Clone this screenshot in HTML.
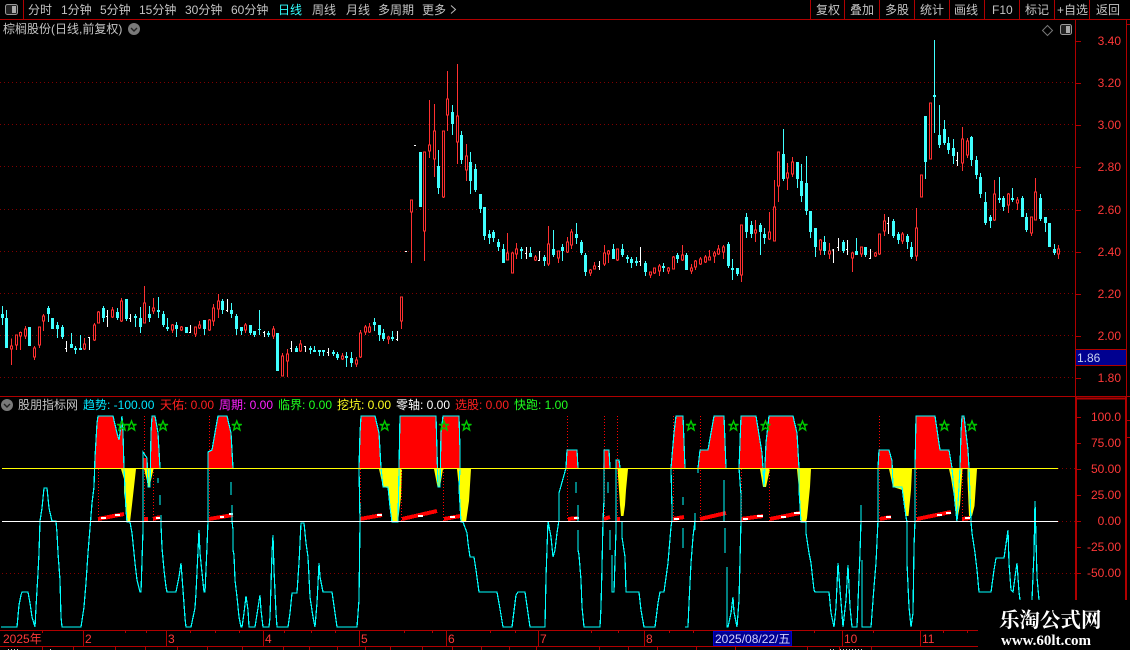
<!DOCTYPE html>
<html><head><meta charset="utf-8"><title>K</title>
<style>
html,body{margin:0;padding:0;background:#000;width:1130px;height:650px;overflow:hidden}
svg{display:block}
text{font-family:"Liberation Sans","WenQuanYi Zen Hei","Noto Sans CJK SC",sans-serif;font-size:12px}
.t{fill:#c4c4c4}
.r{fill:#ff3838}
.l{fill:none;shape-rendering:crispEdges}
</style></head><body>
<svg width="1130" height="650" viewBox="0 0 1130 650" xmlns="http://www.w3.org/2000/svg">
<defs><path id="s" d="M0-5L1.3-1.6 5-1.6 2-.6 3.1 4 0 1.8-3.1 4-2-.6-5-1.6-1.3-1.6Z" fill="none" stroke="#00c800" stroke-width="1.4"/></defs>
<rect width="1130" height="650" fill="#000"/>

<!-- toolbar -->
<g class="l" stroke="#b00000"><path d="M0 19.5H1130M23.5 0V19M810.5 0V19M844.5 0V19M879.5 0V19M914.5 0V19M949.5 0V19M984.5 0V19M1019.5 0V19M1054.5 0V19M1089.5 0V19"/></g>
<rect x="5.5" y="4.5" width="12" height="10" rx="2" fill="#222" stroke="#999"/><rect x="12" y="6" width="4" height="7" fill="#aaa"/>
<text class="t" x="28" y="14">分时</text><text class="t" x="61" y="14">1分钟</text><text class="t" x="100" y="14">5分钟</text><text class="t" x="139" y="14">15分钟</text><text class="t" x="185" y="14">30分钟</text><text class="t" x="231" y="14">60分钟</text><text x="278" y="14" fill="#3ff">日线</text><text class="t" x="312" y="14">周线</text><text class="t" x="346" y="14">月线</text><text class="t" x="378" y="14">多周期</text><text class="t" x="422" y="14">更多</text>
<path d="M451 5.5l4.5 4-4.5 4" fill="none" stroke="#bbb"/>
<text class="t" x="816" y="14">复权</text><text class="t" x="850" y="14">叠加</text><text class="t" x="885" y="14">多股</text><text class="t" x="920" y="14">统计</text><text class="t" x="954" y="14">画线</text><text class="t" x="992" y="14">F10</text><text class="t" x="1025" y="14">标记</text><text class="t" x="1057" y="14">+自选</text><text class="t" x="1096" y="14">返回</text>

<!-- title row -->
<text class="t" x="3" y="33">棕榈股份(日线,前复权)</text>
<circle cx="134" cy="29" r="6" fill="#7a7a7a"/><path d="M131 28l3 3 3-3" fill="none" stroke="#222" stroke-width="1.4"/>
<path d="M1047.5 25.5l5 5-5 5-5-5z" fill="none" stroke="#777"/>
<rect x="1060.5" y="24.5" width="11" height="10" rx="2" fill="#222" stroke="#999"/><rect x="1066" y="26" width="4" height="7" fill="#aaa"/>

<!-- frame -->
<g class="l">
<path stroke="#800000" stroke-dasharray="1 3" d="M0 82.5H1075M0 124.5H1075M0 166.5H1075M0 209.5H1075M0 251.5H1075M0 293.5H1075M0 335.5H1075M0 377.5H1075M2 573.5H1075M1058 468.5H1075M1058 521.5H1075"/>
<path stroke="#b00000" d="M1075.5 19V396M1126.5 19V396M0 396.5H1130M1076 41.5h5M1076 83.5h5M1076 125.5h5M1076 167.5h5M1076 210.5h5M1076 252.5h5M1076 294.5h5M1076 336.5h5M1076 378.5h5M1076 417.5h5M1076 443.5h5M1076 469.5h5M1076 495.5h5M1076 521.5h5M1076 547.5h5M1076 573.5h5M1127 24.5h3M1127 420.5h3M1127 437.5h3"/>
<path stroke="#b00000" stroke-width="2" d="M1076 397V600M1126 397V600M1076 398.5H1127"/>
</g>
<rect x="1076" y="349" width="50" height="16" fill="#000090"/><path class="l" stroke="#b00000" d="M1076 349.5H1126M1076 365.5H1126"/>
<text x="1077" y="362" fill="#c8d0f0" font-size="13">1.86</text>
<g class="r" text-anchor="end">
<text x="1121" y="45">3.40</text><text x="1121" y="87">3.20</text><text x="1121" y="129">3.00</text><text x="1121" y="171">2.80</text><text x="1121" y="214">2.60</text><text x="1121" y="256">2.40</text><text x="1121" y="298">2.20</text><text x="1121" y="340">2.00</text><text x="1121" y="382">1.80</text>
<text x="1121" y="421">100.0</text><text x="1121" y="447">75.00</text><text x="1121" y="473">50.00</text><text x="1121" y="499">25.00</text><text x="1121" y="525">0.00</text><text x="1121" y="551">-25.00</text><text x="1121" y="577">-50.00</text>
</g>

<!-- candles A -->
<g class="l" transform="translate(0 280) scale(.33333)">
<path stroke="#40ffff" stroke-width="3" d="M7 78V135M19 90V204M172 126V174M187 135V177M214 159V204M226 198V222M241 165V210M310 78V126M352 84V120M379 57V123M406 102V141M421 81V159M448 78V126M475 51V114M490 93V141M502 114V153M529 126V171M613 120V165M667 57V102M694 69V114M709 102V165M724 141V165M751 135V165M763 153V171M778 90V165M805 153V171M889 198V216M931 198V222M943 198V216M958 210V228M970 210V228M1000 210V228M1012 216V240M1039 216V261M1054 216V261M1123 114V153M1138 135V183M1150 147V183M1177 153V183M145 78V126"/>
<path stroke="#40ffff" stroke-width="9" d="M7 102V114M19 114V204M88 141V198M145 84V102M157 114V147M172 135V147M187 141V171M214 192V204M226 204V210M241 204V210M310 84V114M352 96V114M379 57V117M406 108V114M421 114V141M448 102V114M475 90V96M490 102V135M502 141V147M529 135V147M559 141V159M613 120V147M667 63V90M694 90V102M709 108V147M724 141V153M751 135V159M763 153V165M778 147V150M805 159V165M832 159V273M889 204V216M931 204V210M943 210V216M958 210V216M970 210V216M1000 216V222M1012 222V234M1039 228V234M1054 234V249M1123 126V135M1138 135V165M1150 159V177M1177 171V177"/>
<path stroke="#ff3030" stroke-width="3" d="M34 175V255M49 163V210M61 155V210M76 138V177M103 198V240M118 141V204M130 102V153M253 174V210M283 129V183M295 93V129M337 81V114M364 54V126M433 18V129M460 54V102M517 132V159M544 138V153M586 141V171M598 123V147M628 117V153M640 72V138M655 42V114M736 129V159M820 138V177M847 219V288M862 207V291M901 180V216M1027 219V240M1069 231V261M1081 150V234M1096 135V165M1108 129V159M1165 168V192M1204 51V147"/>
<path stroke="#ff3030" stroke-width="3" fill="#000" d="M31 198h6V207h-6zM46 165h6V195h-6zM58 158h6V168h-6zM73 147h6V168h-6zM100 204h6V231h-6zM115 141h6V195h-6zM127 108h6V123h-6zM250 192h6V207h-6zM280 135h6V180h-6zM292 96h6V129h-6zM334 90h6V111h-6zM361 63h6V123h-6zM430 69h6V129h-6zM457 84h6V93h-6zM514 135h6V150h-6zM541 141h6V150h-6zM583 141h6V162h-6zM595 135h6V144h-6zM625 120h6V150h-6zM637 84h6V123h-6zM652 63h6V87h-6zM733 135h6V150h-6zM817 147h6V168h-6zM844 228h6V288h-6zM859 222h6V243h-6zM898 192h6V213h-6zM1024 228h6V237h-6zM1066 240h6V252h-6zM1078 159h6V231h-6zM1093 141h6V156h-6zM1105 141h6V156h-6zM1162 171h6V177h-6zM1201 51h6V123h-6z"/>
<path stroke="#fff" stroke-width="3" d="M199 183V216M195 205h4M268 171V210M264 172h4M322 90V141M318 109h4M391 102V126M387 115h4M571 135V159M567 157h4M682 57V96M678 91h4M793 153V171M789 157h4M874 183V216M870 205h4M916 198V216M912 199h4M985 204V228M981 217h4M1192 153V183M1188 178h4"/>
</g>
<!-- candles B -->
<g class="l" transform="translate(400 60) scale(.33333)">
<path stroke="#40ffff" stroke-width="3" d="M115 270V402M157 135V225M184 213V312M211 276V402M226 312V396M241 402V459M253 441V540M268 510V552M280 510V546M295 537V573M310 552V609M364 561V597M391 561V591M433 585V618M460 510V591M487 552V603M529 489V552M544 540V585M556 579V648M640 552V597M667 552V591M682 585V609M694 591V624M709 591V618M736 603V648M790 609V636M832 579V609M859 579V630M985 546V624"/>
<path stroke="#40ffff" stroke-width="9" d="M61 276V441M115 318V384M157 156V192M184 225V300M211 306V363M226 327V390M241 402V447M253 441V528M268 522V534M280 516V534M295 546V561M310 567V609M364 567V573M391 579V591M433 591V603M460 567V585M487 561V573M529 522V534M544 546V579M556 585V636M640 567V597M667 567V585M682 591V597M694 597V609M709 603V609M736 609V636M790 618V624M832 585V597M859 585V630M985 552V618"/>
<path stroke="#ff3030" stroke-width="3" d="M34 420V609M73 276V603M88 120V294M103 132V351M130 213V414M142 33V213M172 12V312M199 252V363M322 519V600M337 576V639M349 549V597M406 585V603M445 498V618M475 573V609M502 531V579M514 507V567M571 627V648M583 606V627M613 555V618M625 570V609M652 567V603M751 636V654M763 624V642M778 612V648M805 621V642M820 588V627M847 555V603M874 612V642M886 600V630M901 591V615M916 585V609M928 570V600M943 573V609M955 555V585M970 555V597"/>
<path stroke="#ff3030" stroke-width="3" fill="#000" d="M31 420h6V456h-6zM70 276h6V513h-6zM85 255h6V273h-6zM100 213h6V297h-6zM127 213h6V411h-6zM139 117h6V165h-6zM169 168h6V246h-6zM196 288h6V330h-6zM319 579h6V600h-6zM334 579h6V639h-6zM346 567h6V582h-6zM403 591h6V600h-6zM442 552h6V612h-6zM472 573h6V594h-6zM499 546h6V576h-6zM511 516h6V555h-6zM568 630h6V639h-6zM580 618h6V627h-6zM610 579h6V612h-6zM622 573h6V582h-6zM649 567h6V600h-6zM748 636h6V645h-6zM760 624h6V639h-6zM775 618h6V633h-6zM802 624h6V633h-6zM817 591h6V627h-6zM844 585h6V600h-6zM871 624h6V633h-6zM883 603h6V621h-6zM898 597h6V612h-6zM913 591h6V606h-6zM925 591h6V600h-6zM940 579h6V588h-6zM952 567h6V582h-6zM967 561h6V576h-6z"/>
<path stroke="#fff" stroke-width="3" d="M15 574h6M42 256h6M379 561V597M375 580h4M418 573V603M414 601h4M598 603V630M594 619h4M721 561V618M717 604h4"/>
</g>
<!-- candles C -->
<g class="l" transform="translate(720 30) scale(.33333)">
<path stroke="#40ffff" stroke-width="3" d="M37 687V750M52 714V738M79 549V624M94 573V624M121 579V675M133 594V642M190 297V453M232 396V474M244 402V516M259 378V555M271 543V624M286 594V681M313 618V675M370 630V669M409 624V675M436 651V681M520 567V624M535 606V642M562 612V657M574 636V687M616 258V447M643 30V309M658 225V354M673 270V345M685 321V372M700 327V402M754 318V408M769 378V447M781 429V504M796 486V585M811 555V594M838 441V519M850 498V543M877 474V516M907 498V561M919 549V606M961 492V573M976 561V606M988 579V651M1003 642V675"/>
<path stroke="#40ffff" stroke-width="9" d="M37 714V720M52 714V732M79 561V606M94 585V612M121 585V606M133 612V624M190 372V447M232 396V447M244 453V498M259 459V543M271 543V606M286 594V651M313 636V663M370 636V663M409 663V675M436 651V675M520 573V618M535 612V630M562 618V636M574 651V681M616 258V396M643 195V201M658 315V345M673 297V339M685 339V360M700 354V378M754 321V390M769 390V435M781 441V492M796 516V579M811 561V573M838 504V510M850 504V531M877 504V510M907 504V561M919 561V600M961 504V567M976 561V579M988 579V651M1003 657V669"/>
<path stroke="#ff3030" stroke-width="3" d="M64 585V756M106 570V636M148 546V630M163 450V633M175 366V516M202 399V480M217 381V441M301 627V675M328 639V687M397 666V726M424 651V681M466 666V681M478 612V675M493 552V618M547 606V642M589 534V693M604 435V501M631 219V387M727 291V423M742 324V384M823 450V573M865 489V549M892 501V540M934 561V618M946 444V570M1015 645V687"/>
<path stroke="#ff3030" stroke-width="3" fill="#000" d="M61 585h6V735h-6zM103 600h6V609h-6zM145 606h6V627h-6zM160 531h6V633h-6zM172 366h6V468h-6zM199 429h6V444h-6zM214 396h6V432h-6zM298 630h6V660h-6zM325 663h6V672h-6zM394 669h6V684h-6zM421 651h6V672h-6zM463 669h6V678h-6zM475 612h6V672h-6zM490 573h6V603h-6zM544 612h6V633h-6zM586 594h6V678h-6zM601 435h6V501h-6zM628 219h6V387h-6zM724 327h6V399h-6zM739 333h6V375h-6zM820 492h6V570h-6zM862 492h6V525h-6zM889 510h6V519h-6zM931 561h6V609h-6zM943 486h6V570h-6zM1012 657h6V672h-6z"/>
<path stroke="#fff" stroke-width="3" d="M340 657V699M336 660h4M355 624V663M351 652h4M382 630V675M378 658h4M451 657V687M447 685h4M505 561V612M501 580h4M712 366V408M708 391h4"/>
</g>

<!-- indicator legend -->
<circle cx="7" cy="405" r="6" fill="#7a7a7a"/><path d="M4 404l3 3 3-3" fill="none" stroke="#222" stroke-width="1.4"/>
<text class="t" x="18" y="409">股朋指标网</text>
<text x="83" y="409" fill="#00e8ff">趋势: -100.00</text>
<text x="160" y="409" fill="#ff2020">天佑: 0.00</text>
<text x="219" y="409" fill="#ff20ff">周期: 0.00</text>
<text x="278" y="409" fill="#20ff20">临界: 0.00</text>
<text x="337" y="409" fill="#ffff20">挖坑: 0.00</text>
<text x="396" y="409" fill="#fff">零轴: 0.00</text>
<text x="455" y="409" fill="#ff2020">选股: 0.00</text>
<text x="514" y="409" fill="#20ff20">快跑: 1.00</text>

<!-- red fills -->
<path fill="#f00" d="M94 468L95 452 97 423 98 416H113L117 433 119 440 120 433 122 423 123 433 124 468ZM143.500 468V458H147V468ZM150 468L151 433 152 416H155L157 433 160 458V468ZM208 468V452L212 450 216 427 218 416H227.500L231 433 233 468ZM359 468L359.500 433 361 416H375.500L379 433 381 468ZM399.500 468V416H436.500L437.500 468ZM440 468V433L443 416H459L460 450 460.500 468ZM565.500 468L567 450H577.500L578 468ZM603 468L604.500 450H609.500L610 468ZM616 468V460H619L619.500 468ZM671 468L673.500 433 675.500 416H683L684.500 468ZM698 468L700 450H708L711 433 713.500 416H724.500L725.500 468ZM739 468L740.500 416H756L762 453 763 468ZM765 468L766.500 443 769 416H793.500L797 433 799 468ZM878 468L879 450H889L892 461 893 468ZM914.500 468L916 416H935.500L940 450H949L952 468ZM959.500 468L961 433 962 416H963.500L968 450 969 468Z"/>
<!-- yellow fills -->
<path fill="#ff0" d="M121 469L124 479V493L126 507 126.500 522H130L132 505 134 487 136 469ZM144 469H153.500L149.500 487 148.500 487ZM379 469L383 487 388 488 390 507 391.500 522H398L401 497 402 469ZM434 469L437.500 487H440L443 469ZM457 469L459 488 461 522H466L469 501 471 469ZM617.500 469H628L626 490 625 505 623.500 516H621L620 505 619 490ZM760 469H770L766 487H763ZM797 469H811L810 487 807 518 806 522H801L799 490ZM889 469H912L911 490 908.500 516H905.500L902.500 490 893 487ZM949 469H962.500L960 505 957 522 955 503 951 478ZM967.500 469H977L974.500 506 972 516H969L967.500 480Z"/>
<!-- ramps -->
<path class="l" stroke="#f00" stroke-width="4" d="M98 519L124 514M144 519H148M153 519L160 517M209 519L233 515M360 519L382 515M402 519L437 511M444 519L460 516M568 519L578 518M604 519L610 517M617 519H620M673 519L684 517M700 519L726 513M741 519L763 516M770 519L800 513M880 519L891 517M917 519L951 512M962 519L970 518"/>
<path class="l" stroke="#fff" stroke-width="2" d="M101 518h5M115 515h5M156 518h4M220 517h4M229 514h4M377 515h5M418 516h5M450 517h5M574 518h5M674 519h5M743 519h5M757 516h6M781 517h5M794 513h6M886 517h5M937 515h5M946 513h5M965 518h5"/>
<!-- signal dotted -->
<path class="l" stroke="#f00" stroke-dasharray="1 2" d="M98.500 469V521M144.500 416V521M153.500 469V521M209.500 416V521M360.500 469V521M401.500 469V521M443.500 469V521M567.500 416V521M604.500 416V521M617.500 416V521M673.500 416V521M700.500 416V521M741.500 469V521M769.500 469V521M879.500 416V521M916.500 469V521M962.500 416V521"/>

<!-- trend line -->
<path class="l" stroke="#00ffff" stroke-width="1.2" d="M1 627H17L19 605 21 595 22 592H28L30 603 32 617 35 627 36 607 38 573 39 553 40 521 42 508 44 488H47L49 508 52 521H56L57 533 58 553 60 580 61 617 62 627H81L84 607 86 583 88 553 90 528 92 503 94 487 95 457 97 423 98 416H113L117 433 119 440 120 433 122 416 123 433 124 468 126 510 127 522H130L132 533 134 553 135 563 137 580 140 592H141L143 530V452L147 458 148 487H150L151 433 152 416H155L158 433 160 468M158 478V483M160 495V505M161 515V525L162 548 164 570 166 587 167 592H176L179 577 181 563 183 590 185 618 186 627H191L195 608 196 593 199 530 200 553 201 563 204 592H205L207 547 208 521V452L212 450 216 427 218 416H227L231 433 233 468M231 482V495M232 505V521L233 530V550L234 555 235 580 237 597 239 617 241 627H242L244 613 246 596 248 610 249 627H255L258 608 260 595 261 610 263 627H269L270 617 272 553 273 535 274 570 276 613 277 627H288L290 613 292 593H297L299 563 301 523H304L306 543 308 557 310 597 313 617 315 627 317 603 319 563 320 577 323 592H332L335 613 337 627H357L359 600 360 521 359 468 360 433 361 416H375L379 433 381 468 383 487H388L390 507 392 522H398L399 468 400 416H436L438 487H440L441 433 443 416H459L460 450V468L459 488 461 522H463L467 533 468 543 470 557H474L476 570 479 592H497L499 603 503 627H512L516 595 518 592H525L528 613 530 627H545L546 577 548 521 551 537 553 557 555 550 557 533 559 520V493L566 468 567 450H577L578 468M576 482V493M578 505V521M578 530V550L579 555 581 580 582 607 584 627H600L601 607 602 567 603 520 604 500V450H609L610 468M608 482V493M610 530V550M612 555V592H614L616 530V460H619L620 468M622 521V537L625 557 626 592H639L641 610 644 627H655L658 603 660 592H664L668 563 671 527 672 520V510L671 468 674 433 676 416H683L685 468M683 497V505M683 528V548M685 627H688L689 603 691 563 693 537 695 520V530M695 513V520M698 473V468L700 450H708L711 433 714 416H724L726 468M724 480V488M724 488V521M725 528V553M727 567V627H728L731 613 733 597 734 612 737 627 739 600 741 520V495L739 468 741 416H756L762 453 763 468 764 487 766 443 769 416H793L797 433 799 468V490L801 522H806V533L809 553 811 563 814 590 815 592H829L831 613 834 627 836 607 838 563 840 590 843 627 846 600 848 565 850 607 852 627H857L860 553 861 520V505M861 505V530M862 560V627H871L874 587 876 563 878 520V468L879 450H889L892 461 893 487H902L906 517 907 522V563L909 607 911 627 913 613 914 547 915 520V468L916 416H935L940 450H949L952 468 955 503 957 522 960 468 961 433 962 416H964L968 450 969 468 971 522 972 533 975 553 977 570 979 592H991L994 570 996 558H1004L1008 530 1009 563 1011 590 1013 592 1016 570 1017 563 1019 592 1020 600M1032 600L1034 553 1035 501 1037 577 1039 600"/>
<!-- base lines -->
<rect x="2" y="468" width="1056" height="1" fill="#ffff00"/>
<rect x="2" y="521" width="1056" height="1" fill="#ffffff"/>
<!-- stars -->
<use href="#s" x="122" y="426"/><use href="#s" x="131.500" y="426"/><use href="#s" x="163" y="426"/><use href="#s" x="236.800" y="426"/><use href="#s" x="384.700" y="426"/><use href="#s" x="444" y="426"/><use href="#s" x="466.500" y="426"/><use href="#s" x="691" y="426"/><use href="#s" x="733.500" y="426"/><use href="#s" x="765.500" y="426"/><use href="#s" x="802.500" y="426"/><use href="#s" x="944.400" y="426"/><use href="#s" x="972" y="426"/>

<!-- time axis -->
<path class="l" stroke="#b00000" d="M0 630.500H978M0 646.500H978M83.500 630V646M166.500 630V646M263.500 630V646M359.500 630V646M446.500 630V646M538.500 630V646M644.500 630V646M842.500 630V646M920.500 630V646M42.500 630v3M125.500 630v3M146.500 630v3M190.500 630v3M215.500 630v3M239.500 630v3M284.500 630v3M311.500 630v3M335.500 630v3M404.500 630v3M432.500 630v3M490.500 630v3M515.500 630v3M591.500 630v3M618.500 630v3M669.500 630v3M693.500 630v3M736.500 630v3M760.500 630v3M814.500 630v3M873.500 630v3M943.500 630v3M967.500 630v3M42.500 647v3M73.500 647v3M115.500 647v3M145.500 647v3M177.500 647v3M207.500 647v3M242.500 647v3M283.500 647v3M309.500 647v3M337.500 647v3M365.500 647v3M390.500 647v3M422.500 647v3M452.500 647v3M481.500 647v3M509.500 647v3M536.500 647v3M599.500 647v3M628.500 647v3M657.500 647v3M696.500 647v3M735.500 647v3M807.500 647v3M839.500 647v3M871.500 647v3"/>
<path class="l" stroke="#ccc" stroke-dasharray="1 2" d="M8 649.500H20M50 649.500H52M830 649.500H836M840 649.500H862"/>
<g class="r">
<text x="3" y="643">2025年</text><text x="85" y="643">2</text><text x="168" y="643">3</text><text x="265" y="643">4</text><text x="361" y="643">5</text><text x="448" y="643">6</text><text x="540" y="643">7</text><text x="646" y="643">8</text><text x="844" y="643">10</text><text x="922" y="643">11</text>
</g>
<rect x="713.500" y="631.500" width="78" height="14" fill="#000090" stroke="#0000d0"/>
<text x="715" y="643" fill="#d0d0ff">2025/08/22/五</text>

<!-- watermark -->
<rect x="978" y="600" width="152" height="50" fill="#000"/>
<text x="999" y="627" fill="#fff" font-weight="700" style="font-family:'Noto Serif CJK SC','Liberation Serif',serif;font-size:20.500px">乐淘公式网</text>
<text x="1001" y="645" fill="#fff" font-weight="700" style="font-family:'Liberation Serif',serif;font-size:15px">www.60lt.com</text>
</svg>
</body></html>
